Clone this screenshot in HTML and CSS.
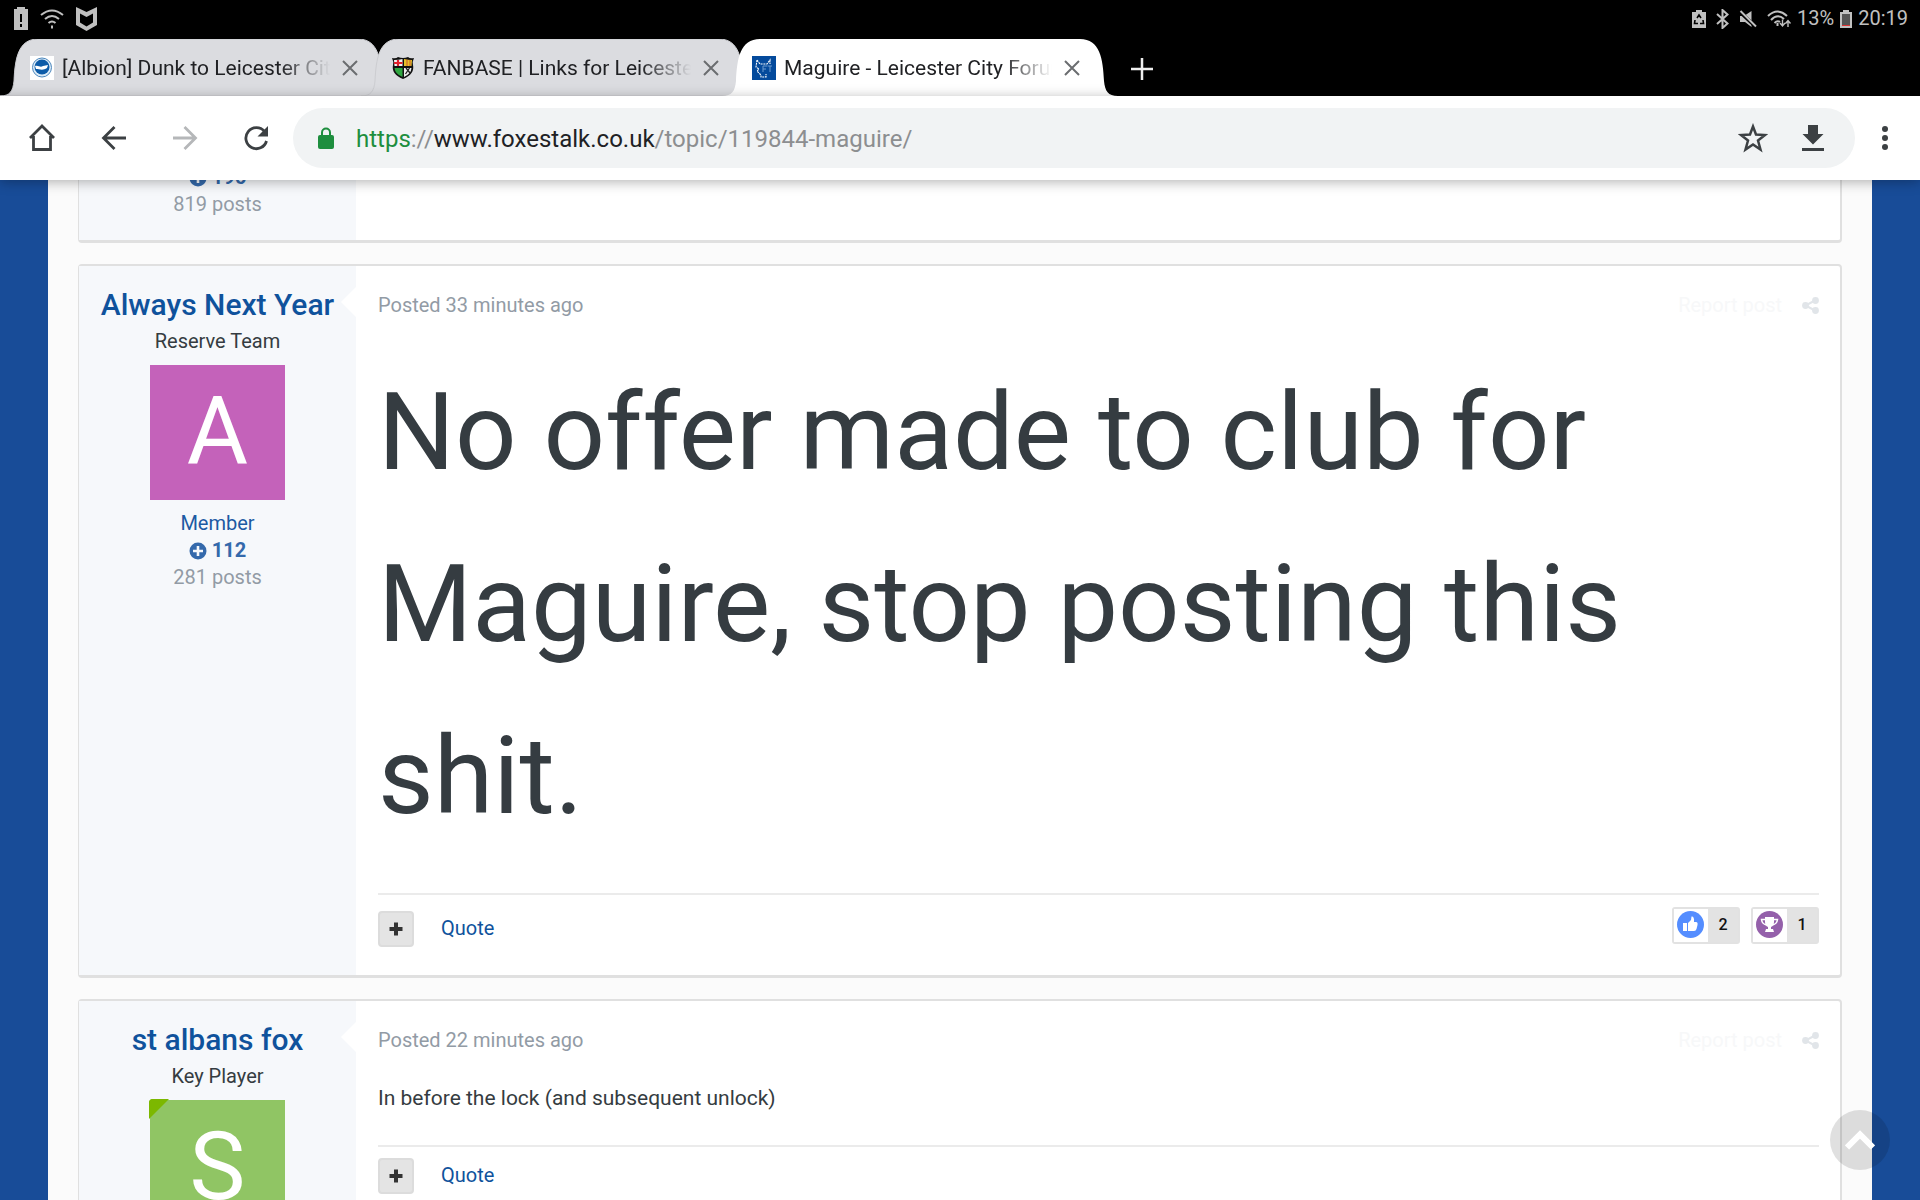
FILE: index.html
```
<!DOCTYPE html>
<html lang="en">
<head>
  <meta charset="UTF-8" />
  <meta name="viewport" content="width=device-width, initial-scale=1.0" />
  <title>Maguire - Leicester City Forum</title>
  <link rel="stylesheet" href="styles.css">
</head>
<body>
  <!-- shapes used more than once -->
  <svg class="defs" width="0" height="0" aria-hidden="true">
    <symbol id="tab-shape" viewBox="0 0 396 57" preserveAspectRatio="none">
      <path d="M0 57C10 57 13 52 14 42C15 20 18 0 38 0H358C378 0 381 20 382 42C383 52 386 57 396 57Z"/>
    </symbol>
    <symbol id="close" viewBox="0 0 16 16">
      <path d="M1 1L15 15M15 1L1 15" fill="none" stroke="#6b6d70" stroke-width="2"/>
    </symbol>
    <symbol id="plus-circle" viewBox="0 0 18 18">
      <circle cx="9" cy="9" r="8.5" fill="#3469ab"/>
      <path d="M9 4v10M4 9h10" stroke="#f6f8fb" stroke-width="2.6"/>
    </symbol>
    <symbol id="share" viewBox="0 0 17 17">
      <path d="M13 3.500L3.500 8.500L13 13.500" fill="none" stroke="#e1e5e9" stroke-width="2"/>
      <circle cx="13.500" cy="3.500" r="3.400" fill="#e1e5e9"/>
      <circle cx="3.500" cy="8.500" r="3.400" fill="#e1e5e9"/>
      <circle cx="13.500" cy="13.500" r="3.400" fill="#e1e5e9"/>
    </symbol>
    <symbol id="plus" viewBox="0 0 14 14">
      <path d="M7 0.500v13M0.500 7h13" stroke="#333" stroke-width="4"/>
    </symbol>
  </svg>

  <div class="status-bar">
    <div class="status-left">
      <svg width="14" height="24" viewBox="0 0 14 24"><path d="M3 0h8v2h3v21H0V2h3z" fill="#c0c0c0"/><path d="M7 7v8M7 17v3" stroke="#000" stroke-width="2"/></svg>
      <svg width="24" height="20" viewBox="0 0 24 20" fill="none" stroke="#c0c0c0" stroke-width="2"><path d="M1 6Q12 -3 23 6M5 10Q12 4 19 10M8.500 14Q12 11 15.500 14"/><path d="M12 16.500v3"/></svg>
      <svg width="21" height="24" viewBox="0 0 21 24"><path d="M0 0L10.500 5L21 0V18L10.500 24L0 18ZM4 6.500V15.500L10.500 19.500L17 15.500V6.500L10.500 10Z" fill="#c0c0c0" fill-rule="evenodd"/></svg>
    </div>
    <div class="status-right">
      <svg width="14" height="18" viewBox="0 0 14 18"><path d="M4 0h6v2h4v16H0V2h4z" fill="#c0c0c0"/><path d="M5 8L7 5L9 8M3 10L2.500 13.500H6M11 10L11.500 13.500H8" fill="none" stroke="#000" stroke-width="1.600"/></svg>
      <svg width="13" height="20" viewBox="0 0 13 20"><path d="M1 5L11.500 14.500L6.500 19V1L11.500 5.500L1 15" fill="none" stroke="#c0c0c0" stroke-width="2"/></svg>
      <svg width="18" height="18" viewBox="0 0 18 18"><path d="M1 6h4L12.500 1V17L6 12H1z" fill="#c0c0c0"/><path d="M0 1L17 17" stroke="#000" stroke-width="3.500"/><path d="M1.500 1L17 16.500" stroke="#c0c0c0" stroke-width="2"/></svg>
      <svg width="24" height="18" viewBox="0 0 24 18" fill="none" stroke="#c0c0c0" stroke-width="2"><path d="M1 6Q10.500 -3 20 6M4 10Q10.500 3 17 9M7.500 13Q10.500 10 13 12"/><path d="M10.500 13v3" /><path d="M15.500 9.500v6M13 13l2.500 3l2.500-3M21 17v-6M18.500 13.500l2.500-3l2.500 3" stroke-width="1.400"/></svg>
      <span>13%</span>
      <svg width="12" height="18" viewBox="0 0 12 18"><path d="M3 0h6v2h3v16H0V2h3z" fill="#c0c0c0"/><path d="M2 4h8v11H2z" fill="#555"/><path d="M2 15h8v1H2z" fill="#d33"/></svg>
      <span>20:19</span>
    </div>
  </div>

  <nav class="tabs">
    <div class="tab">
      <svg class="tab-bg"><use href="#tab-shape"/></svg>
      <svg class="favicon" viewBox="0 0 24 24"><rect width="24" height="24" fill="#fff"/><circle cx="12" cy="11.500" r="9.500" fill="#dcebf7" stroke="#4c87bd"/><circle cx="12" cy="11" r="7.500" fill="#0c5ba8"/><path d="M5 10C9 9 10 12 13 10L18 9L17 12C13 15 9 13 6 13Z" fill="#fff"/></svg>
      <a class="tab-title" href="#">[Albion] Dunk to Leicester City</a>
      <button class="tab-close" aria-label="Close tab"><svg width="16" height="16"><use href="#close"/></svg></button>
    </div>
    <div class="tab">
      <svg class="tab-bg"><use href="#tab-shape"/></svg>
      <svg class="favicon" viewBox="0 0 24 24"><path d="M1 2Q5 3 7 1Q12 3 17 1Q19 3 23 2Q21 6 22 9Q24 18 12 23Q0 18 2 9Q3 6 1 2Z" fill="#111"/><path d="M3 4Q8 4 11.500 3V10H3.500Z" fill="#f3f3f3"/><path d="M7 4V10M3 7H11.500" stroke="#e0202c" stroke-width="2.200"/><path d="M13 3Q17 4 21 4L20.500 10H13Z" fill="#e6c229"/><path d="M16 3.500V10M19 4V10" stroke="#c33f32" stroke-width=".8"/><path d="M3.500 12H11.500V21Q4 18 3.500 12Z" fill="#2fa640"/><path d="M13 12H20.500Q20 18 13 21Z" fill="#eee"/><path d="M15 12l4 5M18.500 12l-4 6" stroke="#222" stroke-width="1.300"/></svg>
      <a class="tab-title" href="#">FANBASE | Links for Leicester</a>
      <button class="tab-close" aria-label="Close tab"><svg width="16" height="16"><use href="#close"/></svg></button>
    </div>
    <div class="tab active">
      <svg class="tab-bg"><use href="#tab-shape"/></svg>
      <svg class="favicon" viewBox="0 0 24 24"><rect width="24" height="24" fill="#044a9c"/><path d="M5 4L8 8H15L18 4L18 8M5 4L4 11L7 13L5 15L9 19V21H14V18" fill="none" stroke="#fff" stroke-width="1.100" stroke-dasharray="2 .8"/><path d="M11 16V10H15M11 13H14M15.500 10H20M18 10V16" fill="none" stroke="#6c9ccf"/></svg>
      <a class="tab-title" href="#">Maguire - Leicester City Forum</a>
      <button class="tab-close" aria-label="Close tab"><svg width="16" height="16"><use href="#close"/></svg></button>
    </div>
    <button class="new-tab" aria-label="New tab"><svg width="22" height="22" viewBox="0 0 22 22"><path d="M11 0v22M0 11h22" stroke="#eee" stroke-width="2.500"/></svg></button>
  </nav>

  <header class="toolbar">
    <button aria-label="Home"><svg width="28" height="28" viewBox="0 0 28 28"><path d="M2 14L14 2L26 14M5.500 12V25.500H22.500V12" fill="none" stroke="#3c4043" stroke-width="2.800"/></svg></button>
    <button aria-label="Back"><svg width="26" height="26" viewBox="0 0 26 26"><path d="M25 13H3M13.500 2L2.500 13L13.500 24" fill="none" stroke="#3c4043" stroke-width="2.800"/></svg></button>
    <button aria-label="Forward"><svg width="26" height="26" viewBox="0 0 26 26"><path d="M1 13H23M12.500 2L23.500 13L12.500 24" fill="none" stroke="#b5b7b9" stroke-width="2.800"/></svg></button>
    <button aria-label="Reload"><svg width="26" height="26" viewBox="0 0 26 26"><path d="M21.500 6.500A10.500 10.500 0 1 0 23.500 16" fill="none" stroke="#3c4043" stroke-width="2.800"/><path d="M25 1V11.500H14.500Z" fill="#3c4043"/></svg></button>
    <div class="omnibox">
      <svg width="16" height="22" viewBox="0 0 16 22"><rect y="8" width="16" height="14" rx="2" fill="#1e8e3e"/><path d="M4 9V5.500a4 4 0 0 1 8 0V9" fill="none" stroke="#1e8e3e" stroke-width="2"/></svg>
      <div class="url" role="textbox" contenteditable="true" spellcheck="false" aria-label="Address"><span class="scheme">https</span><span class="dim">://</span>www.foxestalk.co.uk<span class="dim">/topic/119844-maguire/</span></div>
      <button aria-label="Bookmark"><svg width="30" height="30" viewBox="0 0 30 30"><path d="M15 3.500L18 11.500L27 12L20 17.500L22.500 26.500L15 21.500L7.500 26.500L10 17.500L3 12L12 11.500Z" fill="none" stroke="#3c4043" stroke-width="2.500"/></svg></button>
      <button aria-label="Download"><svg width="22" height="28" viewBox="0 0 22 28"><path d="M6 1H16V10H21.500L11 20.500L0.500 10H6ZM0 24H22V27H0Z" fill="#3c4043"/></svg></button>
    </div>
    <button class="menu" aria-label="Menu"><svg width="6" height="26" viewBox="0 0 6 26" fill="#3c4043"><circle cx="3" cy="4" r="3"/><circle cx="3" cy="13" r="3"/><circle cx="3" cy="22" r="3"/></svg></button>
  </header>

  <div class="viewport">
    <main class="posts">
      <article class="post">
        <aside class="author author-end">
          <p class="rep"><svg width="18" height="18"><use href="#plus-circle"/></svg>196</p>
          <p class="count">819 posts</p>
        </aside>
        <div class="post-body"></div>
      </article>

      <article class="post">
        <aside class="author">
          <h3><a href="#">Always Next Year</a></h3>
          <p class="rank">Reserve Team</p>
          <a class="avatar purple" href="#">A</a>
          <p class="group">Member</p>
          <p class="rep"><svg width="18" height="18"><use href="#plus-circle"/></svg>112</p>
          <p class="count">281 posts</p>
        </aside>
        <div class="post-body arrow">
          <div class="post-meta">
            <a href="#">Posted 33 minutes ago</a>
            <a class="report" href="#">Report post</a>
            <a class="share" href="#" aria-label="Share"><svg width="17" height="17"><use href="#share"/></svg></a>
          </div>
          <p class="shout">No offer made to club for Maguire, stop posting this shit.</p>
          <div class="post-controls">
            <button class="multi" aria-label="Multiquote"><svg width="14" height="14"><use href="#plus"/></svg></button>
            <a href="#">Quote</a>
            <div class="reactions">
              <button class="reaction">
                <span class="icon"><svg width="27" height="27" viewBox="0 0 27 27"><circle cx="13.500" cy="13.500" r="13.500" fill="#548dff"/><path d="M6 12H10V20H6ZM11 12L14 9L14.500 5.500Q17.500 5 17 11H19Q21 11 20.500 14L19.500 18Q19 20 17 20H11Z" fill="#fff"/></svg></span>
                <span class="num">2</span>
              </button>
              <button class="reaction">
                <span class="icon"><svg width="27" height="27" viewBox="0 0 27 27"><circle cx="13.500" cy="13.500" r="13.500" fill="#9460aa"/><path d="M9 6H18V11Q18 15 15 16V18H17L18 21H9L10 18H12V16Q9 15 9 11Z" fill="#fff"/><path d="M9 8.500H5.500Q6 13 10.500 14M18 8.500H21.500Q21 13 16.500 14" fill="none" stroke="#fff" stroke-width="1.500"/></svg></span>
                <span class="num">1</span>
              </button>
            </div>
          </div>
        </div>
      </article>

      <article class="post">
        <aside class="author">
          <h3><a href="#">st albans fox</a></h3>
          <p class="rank">Key Player</p>
          <a class="avatar green online" href="#">S</a>
          <p class="group">Member</p>
        </aside>
        <div class="post-body arrow">
          <div class="post-meta">
            <a href="#">Posted 22 minutes ago</a>
            <a class="report" href="#">Report post</a>
            <a class="share" href="#" aria-label="Share"><svg width="17" height="17"><use href="#share"/></svg></a>
          </div>
          <p class="text">In before the lock (and subsequent unlock)</p>
          <div class="post-controls short">
            <button class="multi" aria-label="Multiquote"><svg width="14" height="14"><use href="#plus"/></svg></button>
            <a href="#">Quote</a>
          </div>
        </div>
      </article>
    </main>
  </div>

  <button class="to-top" aria-label="Back to top"><svg width="30" height="20" viewBox="0 0 30 20"><path d="M2 17.500L15 4.500L28 17.500" fill="none" stroke="#fff" stroke-width="6"/></svg></button>
</body>
</html>
```

FILE: styles.css
```
* {
  box-sizing: border-box;
  margin: 0;
  padding: 0;
}

body {
  font-family: Roboto, "Liberation Sans", sans-serif;
  font-size: 20px;
  line-height: 27px;
  color: #353c41;
  background-color: #184c98;
  height: 100vh;
  overflow: hidden;
  display: flex;
  flex-direction: column;
}

a {
  color: #0f529c;
  text-decoration: none;
}

button {
  border: 0;
  background: none;
  font: inherit;
  cursor: pointer;
}

svg {
  display: block;
  flex: none;
}

.defs {
  position: absolute;
}

/* android status bar */
.status-bar {
  background: #000;
  color: #c0c0c0;
  height: 39px;
  padding: 0 16px 2px 14px;
  display: flex;
  justify-content: space-between;
  align-items: center;
}

.status-left,
.status-right {
  display: flex;
  align-items: center;
  gap: 10px;
}

.status-left {
  gap: 12px;
}

.status-right span {
  margin: 0 -4px;
}

/* tabs */
.tabs {
  background: #000;
  display: flex;
  height: 57px;
}

.tab {
  position: relative;
  width: 396px;
  margin-right: -35px;
  padding: 1px 38px 0 30px;
  display: flex;
  align-items: center;
}

.tab-bg {
  position: absolute;
  top: 0;
  left: 0;
  width: 100%;
  height: 100%;
  fill: #dbdce0;
  stroke: #cccdd1;
}

.tab.active .tab-bg {
  fill: #fff;
  stroke: none;
}

.favicon {
  position: relative;
  width: 24px;
  height: 24px;
}

.tab-title {
  position: relative;
  flex: 1;
  margin: 0 12px 0 8px;
  font-size: 21px;
  color: #202124;
  white-space: nowrap;
  overflow: hidden;
  -webkit-mask-image: linear-gradient(to left, transparent, #000 50px);
  mask-image: linear-gradient(to left, transparent, #000 50px);
}

.tab-close {
  position: relative;
}

.new-tab {
  margin-left: 48px;
  padding-top: 2px;
}

/* toolbar */
.toolbar {
  position: relative;
  z-index: 2;
  background: #fff;
  height: 84px;
  padding: 0 32px 0 28px;
  display: flex;
  align-items: center;
  gap: 45px;
  box-shadow: 0 2px 12px rgba(0, 0, 0, 0.3);
}

.omnibox {
  flex: 1;
  height: 60px;
  margin: 0 -18px 0 -21px;
  padding: 0 31px 0 25px;
  border-radius: 30px;
  background: #f1f3f4;
  display: flex;
  align-items: center;
}

.url {
  flex: 1;
  margin-left: 22px;
  padding-top: 2px;
  font-size: 24px;
  color: #202124;
  white-space: nowrap;
  outline: 0;
}

.url .scheme {
  color: #1e8e3e;
}

.url .dim {
  color: #8c8e90;
}

.omnibox button {
  margin-left: 34px;
}

/* forum page */
.viewport {
  flex: 1;
  min-height: 0;
  overflow: hidden;
  padding: 0 48px;
}

.posts {
  background: #fbfbfb;
  margin-top: -18px;
  padding: 0 30px;
}

.post {
  display: flex;
  margin-bottom: 21px;
  background: #fff;
  border: 2px solid #e0e0e0;
  border-left-width: 1px;
  border-bottom-width: 3px;
  border-radius: 4px;
}

.author {
  width: 277px;
  padding: 24px 0;
  background: #f6f8fb;
  text-align: center;
}

.author-end {
  padding: 0 0 22px;
}

.author h3 {
  font-size: 30px;
  font-weight: 500;
  line-height: 30px;
}

.rank {
  margin: 8px 0 10px;
}

.avatar {
  position: relative;
  display: block;
  width: 135px;
  height: 135px;
  margin: 0 auto 10px;
  font-size: 94px;
  line-height: 135px;
  color: #fff;
}

.avatar.purple {
  background: #c462ba;
}

.avatar.green {
  background: #90c564;
}

.avatar.online::before {
  content: "";
  position: absolute;
  top: -1px;
  left: -1px;
  border: 10px solid transparent;
  border-top-color: #7cb800;
  border-left-color: #7cb800;
  border-radius: 4px 0 0 0;
}

.group {
  color: #1c5aa3;
}

.rep {
  display: flex;
  justify-content: center;
  align-items: center;
  gap: 5px;
  font-weight: 700;
  color: #3469ab;
}

.count {
  color: #929ba5;
}

.post-body {
  position: relative;
  flex: 1;
  padding: 26px 21px 28px 22px;
}

.post-body.arrow::before {
  content: "";
  position: absolute;
  top: 21px;
  left: -15px;
  border: 15px solid transparent;
  border-left-width: 0;
  border-right-color: #fff;
}

.post-meta {
  display: flex;
  align-items: center;
}

.post-meta a {
  color: #929ba5;
}

.post-meta .report {
  margin: 0 20px 0 auto;
  color: #f7f8f9;
}

.shout {
  margin: 27px 0 31px;
  font-size: 108px;
  line-height: 172px;
}

.text {
  margin: 31px 0 33px;
  font-size: 21px;
}

.post-controls {
  display: flex;
  align-items: flex-start;
  padding-top: 16px;
  border-top: 2px solid #ebebeb;
}

.post-controls.short {
  padding-top: 11px;
}

.post-controls > a {
  margin: 4px 0 0 27px;
}

.multi {
  width: 36px;
  height: 36px;
  display: flex;
  justify-content: center;
  align-items: center;
  background: #e4e4e4;
  border: 2px solid #dcdcdc;
  border-radius: 4px;
}

.reactions {
  display: flex;
  gap: 11px;
  margin: -4px 0 0 auto;
}

.reaction {
  display: flex;
  width: 68px;
  height: 37px;
  border: 2px solid #e2e2e2;
  border-radius: 3px;
}

.reaction .icon {
  padding: 2px 4px 4px 3px;
  background: #fff;
}

.reaction .num {
  flex: 1;
  background: #e3e3e3;
  font-size: 16px;
  font-weight: 500;
  line-height: 32px;
  color: #111;
}

.to-top {
  position: fixed;
  right: 30px;
  bottom: 30px;
  width: 60px;
  height: 60px;
  border-radius: 50%;
  background: rgba(0, 0, 0, 0.12);
  display: flex;
  justify-content: center;
  align-items: center;
}
```
